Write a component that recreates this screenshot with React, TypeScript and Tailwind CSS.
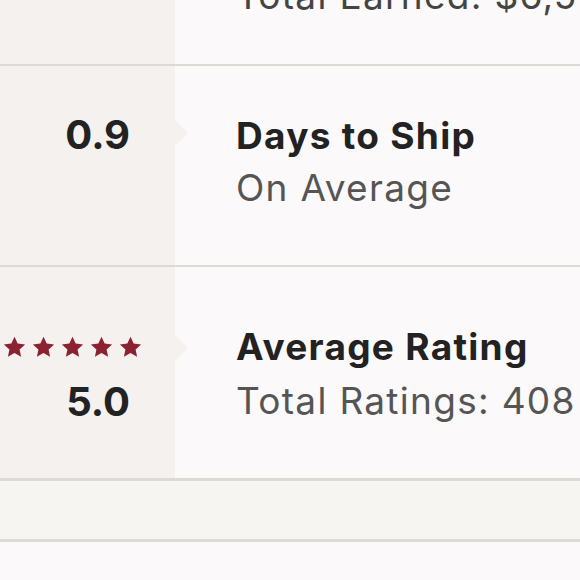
import React from "react";

const Star = () => (
  <svg width="23" height="22" viewBox="0 0 24 23" className="block">
    <path d="M12 0.8l3.3 7.1 7.8 0.9-5.8 5.3 1.6 7.7L12 17.9l-6.9 3.9 1.6-7.7L0.9 8.8l7.8-0.9z" fill="#8c2131" />
  </svg>
);

export default function App() {
  return (
    <div
      className="w-[580px] h-[580px] overflow-hidden bg-[#fbf9fa] text-[#222222]"
      style={{ fontFamily: "Inter, 'Open Sans', sans-serif" }}
    >
      {/* top row (cut) */}
      <div className="flex h-[64px]">
        <div className="w-[175px] bg-[#f4f1ee]" />
        <div className="flex-1 pl-[61px] overflow-hidden">
          <div className="-mt-[21px] text-[37px] leading-[34px] tracking-[0.035em] text-[#444] whitespace-nowrap">
            Total Earned: $6,5
          </div>
        </div>
      </div>
      <div className="h-[2px] bg-[#dcd9d6]" />
      {/* days to ship */}
      <div className="flex h-[199px] relative">
        <div className="w-[175px] bg-[#f4f1ee] flex flex-col items-end pr-[45px] pt-[47px]">
          <div className="text-[40px] leading-[44px] font-bold">0.9</div>
        </div>
        <div className="flex-1 pl-[61px] pt-[50px]">
          <div className="text-[37px] leading-[40px] font-bold tracking-[0.035em] whitespace-nowrap">Days to Ship</div>
          <div className="text-[37px] leading-[40px] mt-[12px] tracking-[0.035em] text-[#555] whitespace-nowrap">On Average</div>
        </div>
        <div className="absolute left-[175px] top-[54px] w-0 h-0 border-y-[13px] border-y-transparent border-l-[13px] border-l-[#f4f1ee]" />
      </div>
      <div className="h-[2px] bg-[#dcd9d6]" />
      {/* rating */}
      <div className="flex h-[211px] relative">
        <div className="w-[175px] bg-[#f4f1ee] flex flex-col items-end pr-[45px] pt-[69px]">
          <div className="flex gap-[6px] -mr-[12px]">
            <Star />
            <Star />
            <Star />
            <Star />
            <Star />
          </div>
          <div className="text-[40px] leading-[44px] font-bold mt-[22px]">5.0</div>
        </div>
        <div className="flex-1 pl-[61px] pt-[60px]">
          <div className="text-[37px] leading-[40px] font-bold tracking-[0.035em] whitespace-nowrap">Average Rating</div>
          <div className="text-[37px] leading-[40px] mt-[14px] tracking-[0.035em] text-[#555] whitespace-nowrap">Total Ratings: 408</div>
        </div>
        <div className="absolute left-[175px] top-[68px] w-0 h-0 border-y-[13px] border-y-transparent border-l-[13px] border-l-[#f4f1ee]" />
      </div>
      <div className="h-[3px] bg-[#dcd9d6]" />
      <div className="h-[58px] bg-[#f6f5f1]" />
      <div className="h-[3px] bg-[#dcd9d6]" />
    </div>
  );
}
